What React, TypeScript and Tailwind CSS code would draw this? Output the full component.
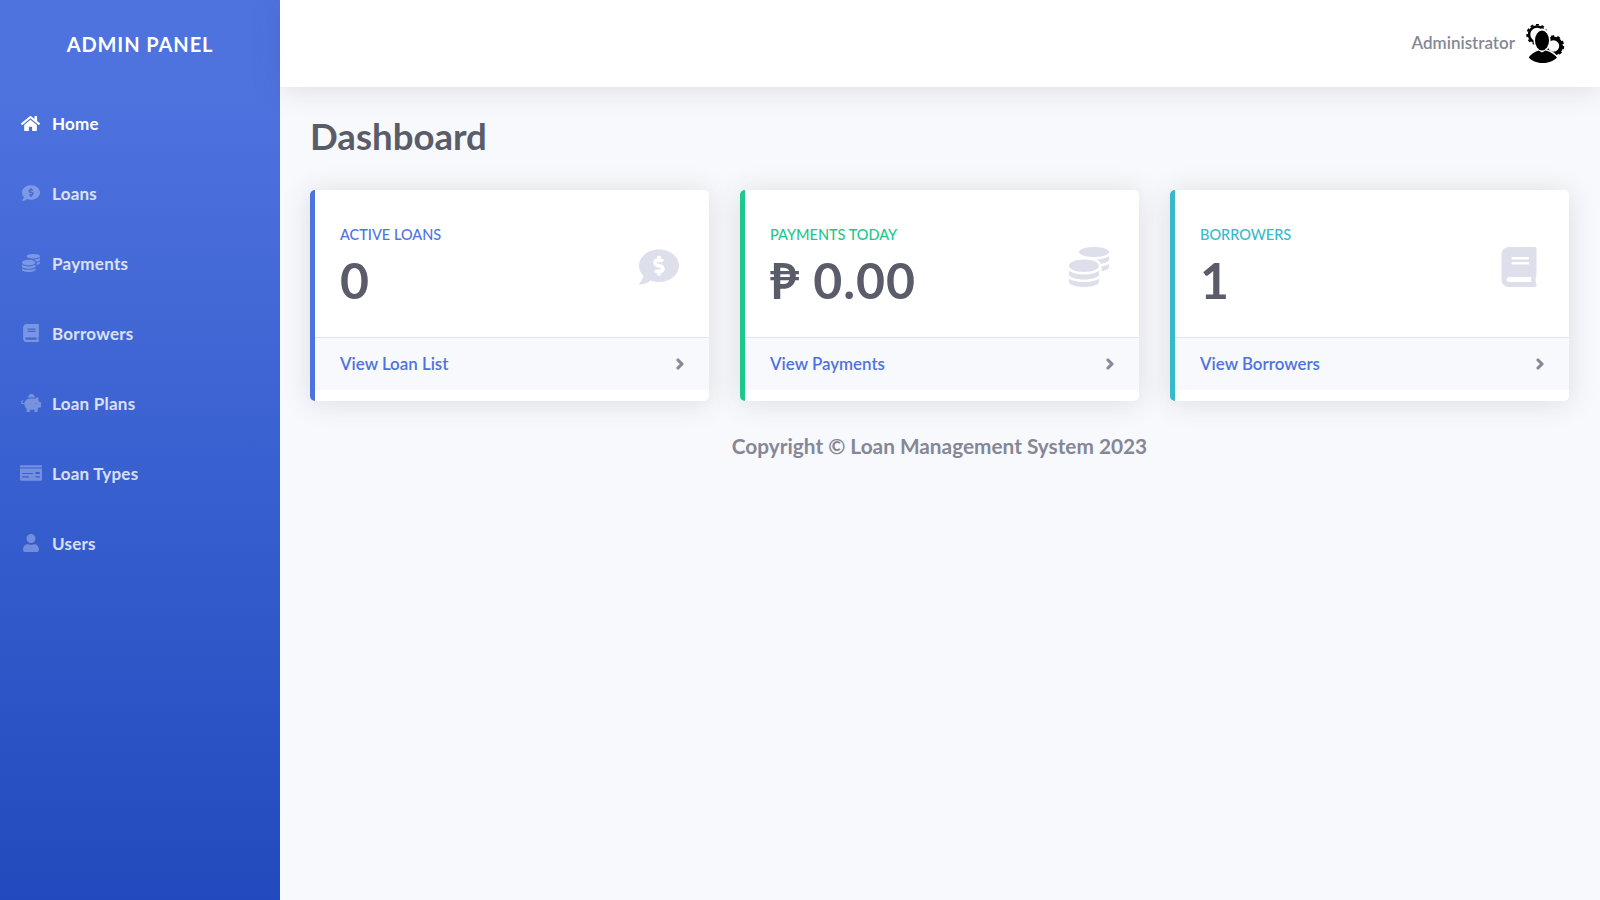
import React from "react";
import { FaHome, FaCommentDollar, FaCoins, FaBook, FaPiggyBank, FaMoneyCheck, FaUser, FaChevronRight } from "react-icons/fa";

const nav = [
  { label: "Home", Icon: FaHome, active: true, size: "text-[19px]" },
  { label: "Loans", Icon: FaCommentDollar, size: "text-[18px]" },
  { label: "Payments", Icon: FaCoins, size: "text-[18px]" },
  { label: "Borrowers", Icon: FaBook, size: "text-[18px]" },
  { label: "Loan Plans", Icon: FaPiggyBank, size: "text-[20px]" },
  { label: "Loan Types", Icon: FaMoneyCheck, size: "text-[22px]" },
  { label: "Users", Icon: FaUser, size: "text-[18px]" },
];

const cards = [
  { label: "ACTIVE LOANS", value: "0", link: "View Loan List", Icon: FaCommentDollar, border: "border-l-[#4e73df]", text: "text-[#4e73df]" },
  { label: "PAYMENTS TODAY", value: "₱ 0.00", link: "View Payments", Icon: FaCoins, border: "border-l-[#1cc88a]", text: "text-[#1cc88a]" },
  { label: "BORROWERS", value: "1", link: "View Borrowers", Icon: FaBook, border: "border-l-[#36b9cc]", text: "text-[#36b9cc]" },
];

function Avatar() {
  return (
    <svg viewBox="0 0 40 40" className="h-10 w-10">
      <circle cx="11" cy="10.5" r="8" fill="none" stroke="#000" strokeWidth="2.6" />
      <circle cx="11" cy="10.5" r="9.8" fill="none" stroke="#000" strokeWidth="1.8" strokeDasharray="3 2.6" />
      <circle cx="27.5" cy="22" r="7.6" fill="none" stroke="#000" strokeWidth="3.8" />
      <circle cx="27.5" cy="22" r="9.8" fill="none" stroke="#000" strokeWidth="1.8" strokeDasharray="3.2 3" />
      <ellipse cx="16" cy="16" rx="8.6" ry="11.6" fill="#fff" />
      <circle cx="11" cy="10.5" r="3.6" fill="none" stroke="#fff" strokeWidth="2" />
      <path d="M1 36 C4 28 10 25 16 25 C23 25 29 28 33 34 C29 40 22 41 17 41 C11 41 5 40 1 36 Z" fill="#fff" />
      <ellipse cx="16" cy="16.5" rx="7" ry="10" fill="#000" />
      <path d="M2.8 33.5 C5 29.5 9.5 27.5 12.5 26.4 L16 28.5 L19.5 26.4 C24 27.5 28.5 30 31 33.5 C27 37.5 22 39 17 39 C11.5 39 6.5 37.5 2.8 33.5 Z" fill="#000" />
    </svg>
  );
}

export default function App() {
  return (
    <div className="flex h-[900px] w-[1600px] overflow-hidden bg-[#f8f9fc] font-['Lato','Noto_Sans',sans-serif]">
      <aside className="w-[280px] shrink-0 bg-gradient-to-b from-[#4e73df] from-10% to-[#224abe] text-white">
        <div className="flex h-[88px] items-center justify-center text-[20px] font-bold tracking-[0.9px]">ADMIN PANEL</div>
        <nav className="flex flex-col">
          {nav.map(({ label, Icon, active, size }) => (
            <div key={label} className={`flex h-[70px] items-center text-[17px] font-bold tracking-[0.25px] ${active ? "text-white" : "text-white/80"}`}>
              <span className={`flex w-[52px] justify-center pl-[9px] ${size} ${active ? "text-white" : "text-white/30"}`}>
                <Icon />
              </span>
              <span className="mt-[1px]">{label}</span>
            </div>
          ))}
        </nav>
      </aside>
      <main className="flex min-w-0 flex-1 flex-col">
        <header className="flex h-[87px] items-center justify-end gap-[11px] bg-white pr-[34px] shadow-[0_2px_28px_0_rgba(58,59,69,0.15)]">
          <span className="mb-[2px] text-[17px] font-semibold text-[#858796]">Administrator</span>
          <Avatar />
        </header>
        <div className="pr-[31px] pl-[30px]">
          <h1 className="mt-[24px] h-[50px] text-[36.6px] leading-[50px] font-bold text-[#5a5c69]">Dashboard</h1>
          <div className="mt-[29px] grid grid-cols-3 gap-[31px]">
            {cards.map(({ label, value, link, Icon, border, text }) => (
              <div key={label} className={`h-[211px] overflow-hidden rounded-[5px] border-l-[5px] bg-white shadow-[0_2px_28px_0_rgba(58,59,69,0.15)] ${border}`}>
                <div className="flex h-[147px] justify-between pt-[37px] pr-[30px] pl-[25px]">
                  <div>
                    <div className={`text-[14.5px] leading-[16px] font-medium ${text}`}>{label}</div>
                    <div className="mt-[7px] text-[50px] leading-[60px] font-bold tracking-[1px] text-[#5a5c69]">{value}</div>
                  </div>
                  <Icon className="mt-[20px] text-[40px] text-[#dddfeb]" />
                </div>
                <div className="flex h-[53px] items-center justify-between border-t border-[#e3e6f0] bg-[#f8f9fc] pr-[23px] pl-[25px]">
                  <span className="text-[16.9px] font-semibold text-[#4e73df]">{link}</span>
                  <FaChevronRight className="stroke-[#858796] stroke-[50] text-[12px] text-[#858796]" />
                </div>
              </div>
            ))}
          </div>
          <div className="mt-[31px] text-center text-[20.8px] leading-[28px] font-bold text-[#858796]">Copyright © Loan Management System 2023</div>
        </div>
      </main>
    </div>
  );
}
